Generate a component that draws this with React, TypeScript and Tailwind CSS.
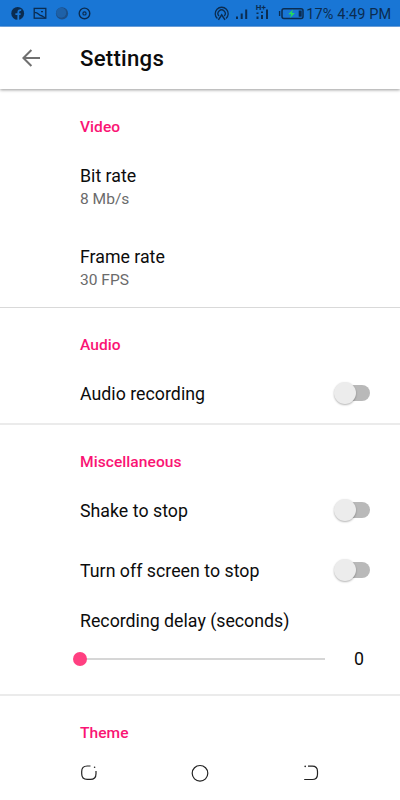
import React, { useState } from "react";

const switchItems = ["Shake to stop", "Turn off screen to stop"];

const videoItems = [
  { title: "Bit rate", summary: "8 Mb/s" },
  { title: "Frame rate", summary: "30 FPS" },
];

const SectionTitle = ({ children }: { children: React.ReactNode }) => (
  <h2 className="h-7 pl-20 text-[15.55px] leading-[21px] font-medium tracking-[0.06px] text-[#fa1474]">
    {children}
  </h2>
);

const SwitchRow = ({ title }: { title: string }) => {
  const [checked, setChecked] = useState(false);

  return (
    <div className="flex h-[60px] items-center justify-between pr-[30px] pl-20">
      <span className="pt-px text-[17.75px] leading-6 tracking-[0.02px]">{title}</span>
      <button
        role="switch"
        aria-checked={checked}
        aria-label={title}
        onClick={() => setChecked(!checked)}
        className={`flex h-4 w-[34px] items-center rounded-full ${
          checked ? "justify-end bg-[#ff9ec0]" : "bg-[#b9b9b9]"
        }`}
      >
        <span
          className={`-ml-0.5 h-[22px] w-[22px] shrink-0 rounded-full shadow-[0_1px_2px_rgba(0,0,0,0.3)] ${
            checked ? "bg-[#ff4081]" : "bg-[#ececec]"
          }`}
        />
      </button>
    </div>
  );
};

const StatusBar = () => (
  <div className="flex h-[27px] shrink-0 items-center border-b border-[#70a9e8] bg-[#1976d5] text-[#0b2c50]">
    <svg width="400" height="26" viewBox="0 0 400 26" fill="none" stroke="currentColor">
      {/* Facebook */}
      <circle cx="17.7" cy="13.4" r="6.4" fill="currentColor" stroke="none" />
      <path d="M18.3 20v-7.5c0-2 .9-2.7 2.9-2.4M15.4 14.2h5.2" stroke="#1976d5" strokeWidth="1.8" />
      {/* Picture */}
      <rect x="34.2" y="8.4" width="11.6" height="9.8" strokeWidth="1.3" />
      <path d="M34.5 12.3c4 .2 4.2 3 6.2 3.2 1.6.1 2.2 1.3 4.5 2.2M41 11.6h2" strokeWidth="1.3" />
      <circle cx="62" cy="13.4" r="6.1" fill="#1c4f88" stroke="none" />
      <circle cx="61.2" cy="12.8" r="5" fill="#1e61a8" stroke="none" />
      {/* Recorder */}
      <circle cx="84.5" cy="13.4" r="5.3" strokeWidth="1.4" />
      <circle cx="84.5" cy="13.4" r="1.6" strokeWidth="1.2" />
      {/* Hotspot */}
      <path d="M217.4 18.6a6.5 6.5 0 1 1 8.6 0M219 16a3.6 3.6 0 1 1 5.2 0" strokeWidth="1.3" />
      <path d="m218.4 19.8 3.3-5 3.3 5" strokeWidth="1.5" />
      {/* Signal strength */}
      <path d="M237 16.5V19M241.7 13.5V19M246.2 9.5V19" strokeWidth="2" />
      <path d="M257.5 12.5v1.5m0 2.5V19M262 11.5v1.5m0 2V19M267 9.5V19" strokeWidth="2" />
      <text
        x="255.8"
        y="10"
        fill="currentColor"
        stroke="none"
        className="font-['Roboto',sans-serif] text-[8px] font-bold"
      >
        H+
      </text>
      {/* Battery */}
      <path d="M279.6 11v5" strokeWidth="1.4" />
      <rect x="282" y="8.8" width="21" height="9.6" rx="2" strokeWidth="1.5" />
      <path d="M300.2 10.5v6.2" strokeWidth="3" />
      <path d="m293 9.5-4.7 4.8h3l-1.2 3.8 4.8-5.2h-3z" fill="#25dc5b" stroke="none" />
      <text
        x="306.2"
        y="19"
        textLength="85"
        fill="currentColor"
        stroke="none"
        className="font-['Roboto',sans-serif] text-[14.5px]"
      >
        17% 4:49 PM
      </text>
    </svg>
  </div>
);

const NavigationBar = () => (
  <div className="flex h-[54px] shrink-0 items-center justify-between bg-white px-20 text-[#222]">
    <svg width="18" height="18" viewBox="0 0 18 18" fill="none" stroke="currentColor" strokeWidth="1.2">
      <path d="M10.5 2H7.2Q1.7 2 1.7 7.5v2.3Q1.7 15.4 7.2 15.4h3.1q5.7 0 5.7-5.7V7" />
      <circle cx="14.6" cy="3.2" r=".8" fill="currentColor" stroke="none" />
    </svg>
    <svg width="18" height="18" viewBox="0 0 18 18" fill="none" stroke="currentColor" strokeWidth="1.2">
      <circle cx="9" cy="9.3" r="7.8" />
    </svg>
    <svg width="18" height="18" viewBox="0 0 18 18" fill="none" stroke="currentColor" strokeWidth="1.2">
      <path d="M6 2.2h4.2q5.3 0 5.3 5.2v2.8q0 5.3-5.3 5.3H2.2" />
      <circle cx="3.2" cy="2.4" r=".8" fill="currentColor" stroke="none" />
    </svg>
  </div>
);

const App = () => {
  const [delay, setDelay] = useState(0);

  return (
    <div className="flex h-[800px] w-[400px] flex-col overflow-hidden bg-white font-['Roboto',sans-serif] text-[#0c0c0c]">
      <StatusBar />

      {/* Header */}
      <header className="z-10 flex h-[62px] shrink-0 items-center bg-white pl-[22px] shadow-[0_1px_3px_rgba(0,0,0,0.4)]">
        <button aria-label="Back" className="w-[58px] text-[#707070]">
          <svg width="18" height="18" viewBox="0 0 18 18" fill="none" stroke="currentColor" strokeWidth="2">
            <path d="M18 9H1.8M9.4 1 1.4 9l8 8" />
          </svg>
        </button>
        <h1 className="text-[22.2px] leading-7 font-medium tracking-[0.25px]">Settings</h1>
      </header>

      <main className="min-h-0 flex-1 overflow-hidden">
        {/* Video */}
        <section className="pt-7">
          <SectionTitle>Video</SectionTitle>
          {videoItems.map((item) => (
            <div key={item.title} className="h-[81px] pt-[19px] pl-20">
              <div className="text-[17.75px] leading-6">{item.title}</div>
              <div className="text-[15.55px] leading-[22px] text-[#6b6b6b]">{item.summary}</div>
            </div>
          ))}
        </section>

        {/* Audio */}
        <section className="border-t border-[#d9d9d9] pt-[27px]">
          <SectionTitle>Audio</SectionTitle>
          <SwitchRow title="Audio recording" />
        </section>

        {/* Miscellaneous */}
        <section className="border-t-2 border-[#ebebeb] pt-[27px]">
          <SectionTitle>Miscellaneous</SectionTitle>
          {switchItems.map((title) => (
            <SwitchRow key={title} title={title} />
          ))}
          <div className="h-[94px] pt-[9px] pl-20">
            <div className="text-[17.75px] leading-6">Recording delay (seconds)</div>
            <div className="mt-[14px] flex h-6 items-center">
              <button
                aria-label="Recording delay"
                onClick={() => setDelay(delay + 1)}
                className="z-10 -ml-[7px] h-[14px] w-[14px] rounded-full bg-[#ff4081]"
              />
              <div className="-ml-[7px] h-0.5 w-[245px] bg-[#d6d6d6]" />
              <span className="ml-[29px] text-[17.75px] leading-6">{delay}</span>
            </div>
          </div>
        </section>

        {/* Theme */}
        <section className="border-t-2 border-[#ebebeb] pt-[27px]">
          <SectionTitle>Theme</SectionTitle>
        </section>
      </main>

      <NavigationBar />
    </div>
  );
};

export default App;
